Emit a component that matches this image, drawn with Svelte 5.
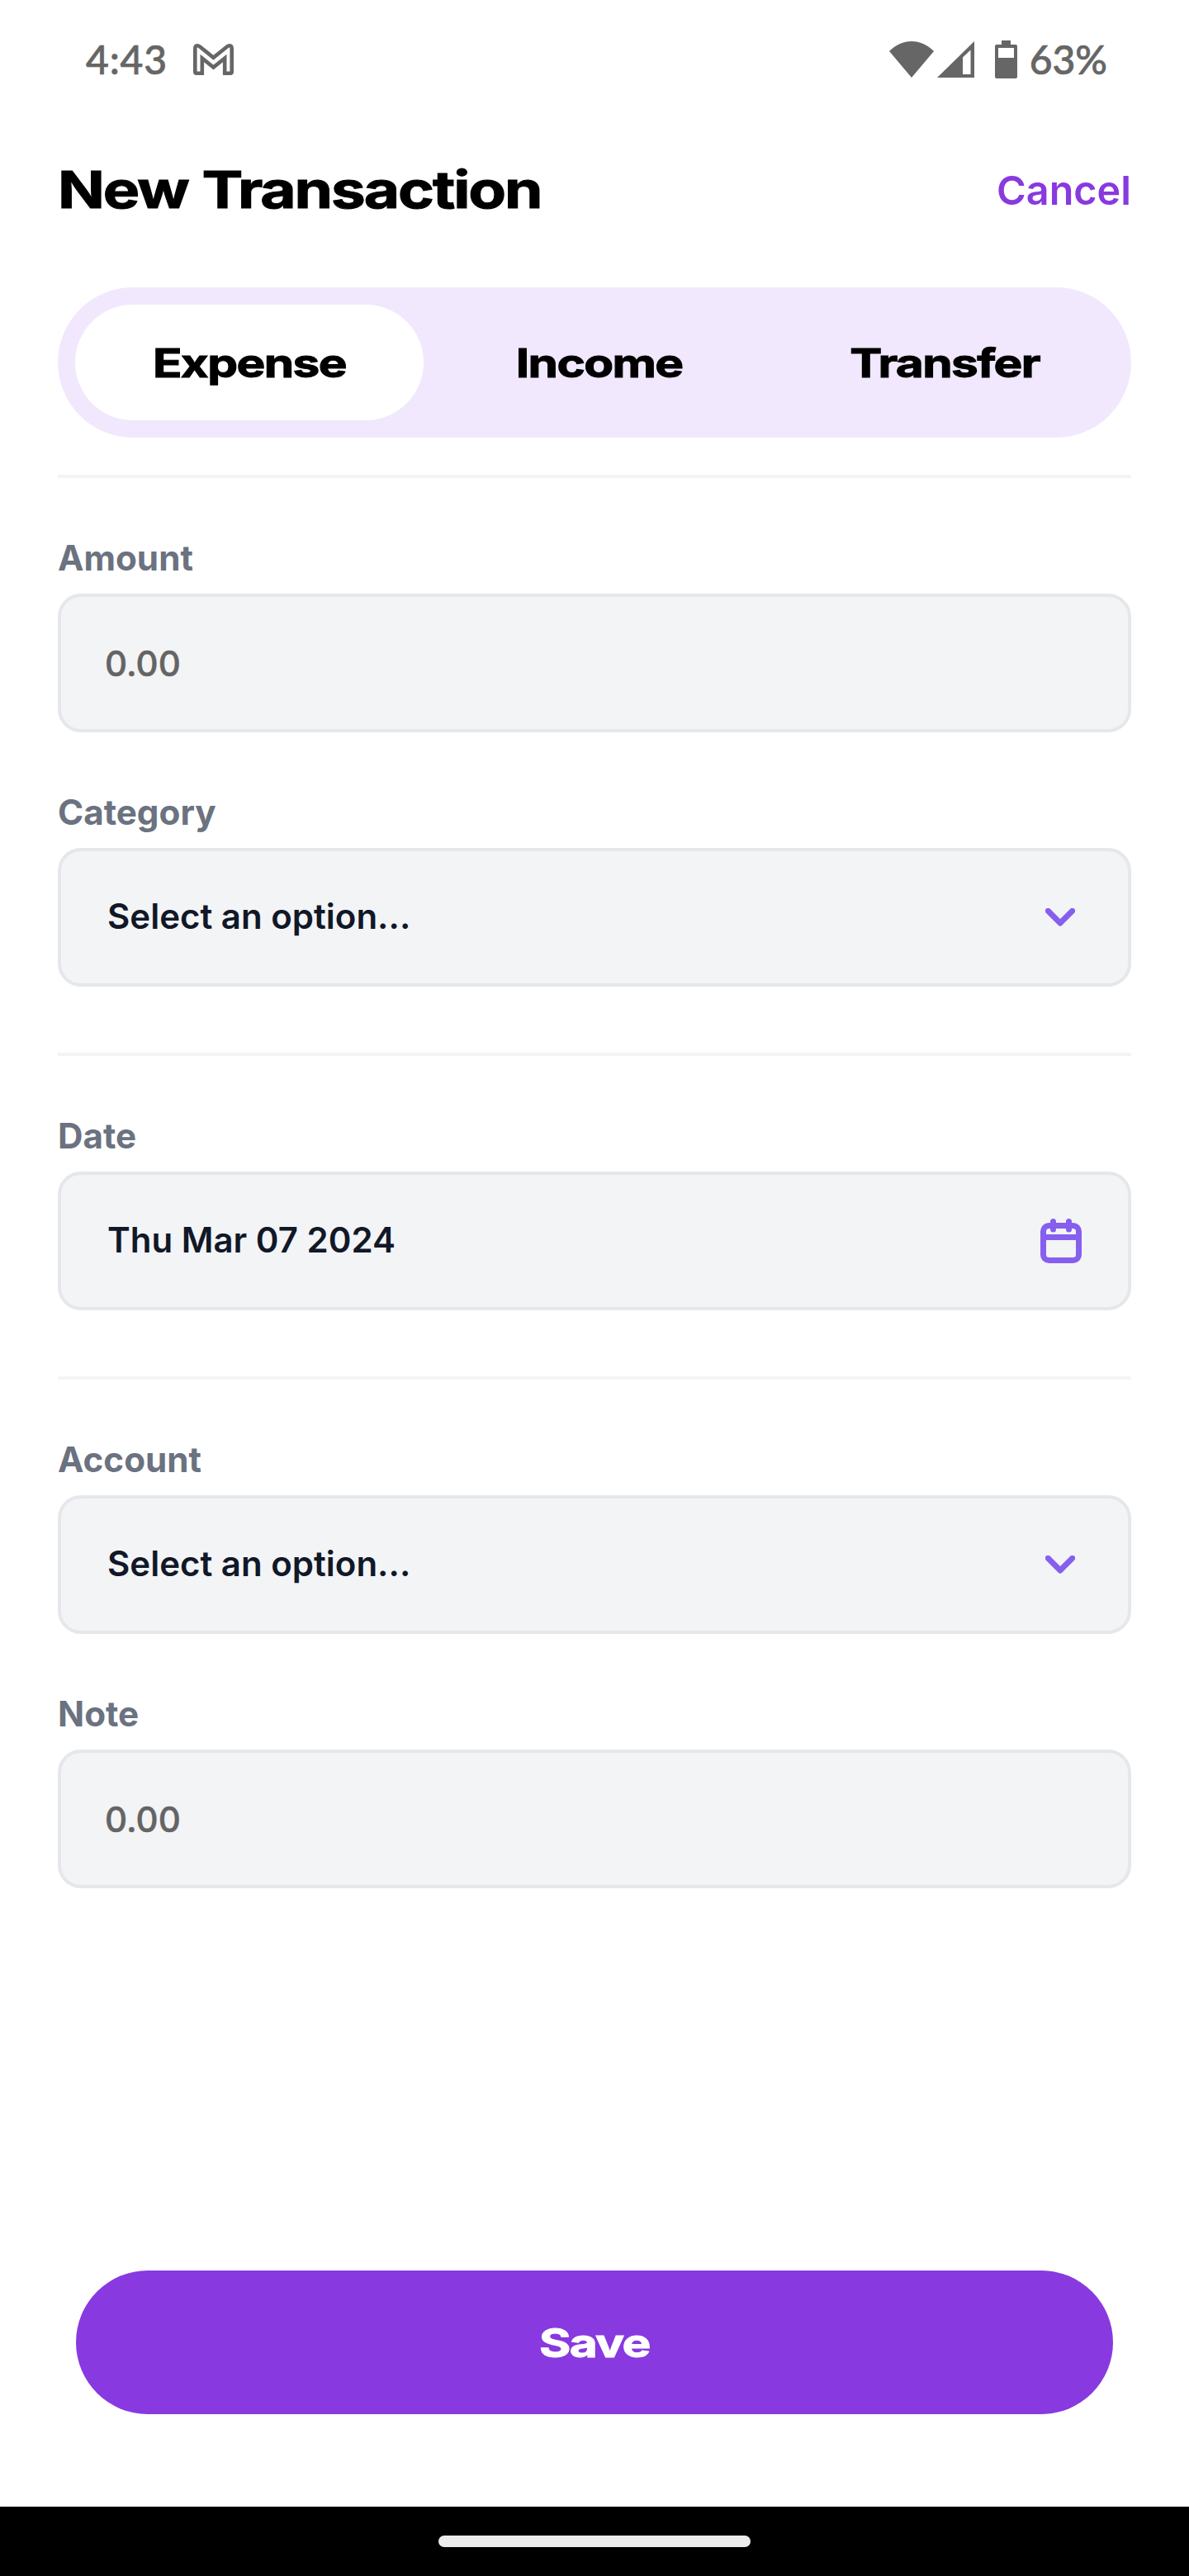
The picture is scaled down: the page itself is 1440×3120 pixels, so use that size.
<script>
  const tabs = ['Expense', 'Income', 'Transfer'];
  let active = $state('Expense');
</script>

{#snippet chevron()}
  <svg class="chevron" viewBox="0 0 36 22"><path d="M3.3 3.3 18 18 32.7 3.3" /></svg>
{/snippet}

<div class="screen">
  <div class="status">
    <span class="clock">4:43</span>
    <svg class="gmail" viewBox="0 0 49 38"><path d="M2.300 34V6Q2.300 2.300 5 2.300Q6.500 2.300 8 3.500L24.500 16.800L41 3.500Q42.500 2.300 44 2.300Q46.700 2.300 46.700 6V34Q46.700 35.700 45 35.700H38.200V17.500L24.500 28.500L10.800 17.500V35.700H4Q2.300 35.700 2.300 34Z" /></svg>
    <div class="right">
      <svg class="wifi" viewBox="0 0 54 44"><path d="M27 44 0 12C16-4 38-4 54 12Z" /></svg>
      <svg class="signal" viewBox="0 0 45 44"><path fill-rule="evenodd" d="M0 44 45 0V44ZM31 19.500V40H40.500V10.500Z" /></svg>
      <svg class="battery" viewBox="0 0 27 46"><path fill-rule="evenodd" d="M8 0H19V5H25Q27 5 27 7V44Q27 46 25 46H2Q0 46 0 44V7Q0 5 2 5H8ZM4 9V21H23V9Z" /></svg>
      <span class="percent">63%</span>
    </div>
  </div>

  <header>
    <h1><span>New Transaction</span></h1>
    <button class="cancel">Cancel</button>
  </header>

  <nav>
    {#each tabs as tab}
      <button class:active={active === tab} onclick={() => (active = tab)}><span>{tab}</span></button>
    {/each}
  </nav>

  <main>
    <section>
      <div class="field">
        <label for="amount">Amount</label>
        <div class="box entry"><input id="amount" placeholder="0.00" /></div>
      </div>
      <div class="field">
        <span class="label">Category</span>
        <div class="box"><span class="value">Select an option...</span>{@render chevron()}</div>
      </div>
    </section>
    <section>
      <div class="field">
        <span class="label">Date</span>
        <div class="box">
          <span class="value">Thu Mar 07 2024</span>
          <svg class="calendar" viewBox="0 0 50 54">
            <rect x="3.500" y="8.500" width="43" height="42" rx="7" />
            <path d="M3.500 22.500H46.500M15.500 3.500V13M34.500 3.500V13" />
          </svg>
        </div>
      </div>
    </section>
    <section>
      <div class="field">
        <span class="label">Account</span>
        <div class="box"><span class="value">Select an option...</span>{@render chevron()}</div>
      </div>
      <div class="field">
        <label for="note">Note</label>
        <div class="box entry"><input id="note" placeholder="0.00" /></div>
      </div>
    </section>
  </main>

  <button class="save"><span>Save</span></button>
  <div class="home"><i></i></div>
</div>

<style>
  :global(body) { margin: 0; background: #fff; }
  .screen {
    width: 1440px;
    height: 3120px;
    display: flex;
    flex-direction: column;
    box-sizing: border-box;
    background: #fff;
    font-family: Inter, sans-serif;
  }
  button { border: 0; padding: 0; background: none; font-family: inherit; }
  svg { display: block; flex: none; }
  .status {
    height: 144px;
    box-sizing: border-box;
    padding: 0 99px 0 104px;
    display: flex;
    align-items: center;
    color: #666;
    font: 500 48px/60px Lato, sans-serif;
    -webkit-text-stroke: 0.7px #666;
    fill: #666;
  }
  .clock { letter-spacing: 0.8px; }
  .gmail { width: 49px; height: 38px; margin-left: 31px; fill: none; stroke: #666; stroke-width: 4.6; }
  .right { margin-left: auto; display: flex; align-items: center; }
  .wifi { width: 54px; height: 44px; margin-right: 4px; }
  .signal { width: 45px; height: 44px; margin-right: 25px; }
  .battery { width: 27px; height: 46px; margin-right: 15px; }
  header {
    height: 204px;
    box-sizing: border-box;
    padding: 0 70px 32px;
    display: flex;
    justify-content: space-between;
    align-items: center;
  }
  h1 { margin: 0; font-size: 62px; line-height: 76px; font-weight: 700; }
  h1 span, nav span, .save span { display: inline-block; letter-spacing: -0.028em; transform: scaleX(1.22); -webkit-text-stroke: 1px currentColor; }
  h1 span { transform: scaleX(1.205); transform-origin: left; word-spacing: 1px; }
  .cancel { padding-top: 2px; color: #8839df; font-size: 48.5px; line-height: 60px; font-weight: 600; }
  nav {
    height: 182px;
    box-sizing: border-box;
    margin: 0 70px;
    padding: 21px;
    display: grid;
    grid-template-columns: 422fr 426fr 410fr;
    border-radius: 91px;
    background: #f1e8fd;
  }
  nav button { border-radius: 70px; color: #000; font-size: 48px; font-weight: 700; }
  nav .active { background: #fff; }
  main { margin: 45px 70px 0; }
  section { border-top: 4px solid #f3f4f6; padding: 71px 0 80px; display: grid; gap: 71px; }
  .field { display: grid; gap: 17px; }
  label, .label { height: 52px; color: #6b7280; font-size: 42.2px; line-height: 52px; font-weight: 700; }
  .box {
    height: 168px;
    box-sizing: border-box;
    border: 4px solid #e5e7eb;
    border-radius: 28px;
    background: #f3f4f6;
    padding: 0 56px 0 56px;
    display: flex;
    align-items: center;
    justify-content: space-between;
    color: #111827;
    font-size: 42px;
    font-weight: 600;
  }
  .value { padding-bottom: 4px; }
  .entry { padding-left: 53px; }
  input { width: 100%; padding: 2px 0 0; border: 0; outline: 0; background: none; font: 500 42px/60px Inter, sans-serif; }
  input::placeholder { color: #646464; opacity: 1; -webkit-text-stroke: 0.5px #646464; }
  .chevron { width: 36px; height: 22px; margin-right: 8px; fill: none; stroke: #865fee; stroke-width: 6.900; stroke-linecap: round; stroke-linejoin: round; }
  .calendar { width: 50px; height: 54px; fill: none; stroke: #865fee; stroke-width: 7; stroke-linecap: round; }
  .save { margin: auto 92px 112px; height: 174px; border-radius: 87px; background: #8839df; color: #fff; font-size: 48px; font-weight: 700; flex: none; }
  .home { height: 84px; flex: none; background: #000; display: flex; align-items: center; justify-content: center; }
  .home i { width: 378px; height: 14px; border-radius: 7px; background: #ececec; }
</style>
